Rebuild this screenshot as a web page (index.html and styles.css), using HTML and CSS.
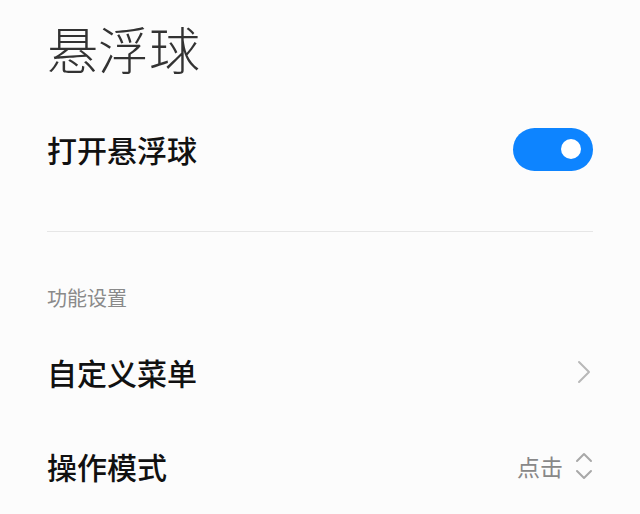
FILE: index.html
```html
<!DOCTYPE html>
<html lang="zh-CN">
<head>
    <meta charset="UTF-8">
    <title>悬浮球</title>
    <link rel="stylesheet" href="styles.css">
</head>
<body>
    <div class="page">
        <h1 class="page-title">悬浮球</h1>

        <div class="row row-main">
            <span class="row-label">打开悬浮球</span>
            <span class="switch on"><span class="knob"></span></span>
        </div>

        <div class="divider"></div>

        <div class="section-title">功能设置</div>

        <div class="row">
            <span class="row-label">自定义菜单</span>
            <svg class="chevron" width="14" height="24" viewBox="0 0 14 24">
                <path d="M2 2 L12 12 L2 22" fill="none" stroke="#b8b8b8" stroke-width="2" stroke-linecap="round" stroke-linejoin="round"/>
            </svg>
        </div>

        <div class="row">
            <span class="row-label">操作模式</span>
            <span class="row-value">
                点击
                <svg class="updown" width="18" height="28" viewBox="0 0 18 28">
                    <path d="M2 9 L9 2 L16 9 M2 19 L9 26 L16 19" fill="none" stroke="#a8a8a8" stroke-width="2" stroke-linecap="round" stroke-linejoin="round"/>
                </svg>
            </span>
        </div>
    </div>
</body>
</html>
```

FILE: styles.css
```css
body {
    margin: 0;
    background-color: #fcfcfc;
    font-family: 'Noto Sans CJK SC', 'Noto Sans', sans-serif;
    color: #1a1a1a;
}
.page {
    padding: 0 47px;
}
.page-title {
    margin: 0;
    padding-top: 17px;
    font-size: 51px;
    font-weight: 300;
    line-height: 62px;
    color: #333;
}
.row {
    display: flex;
    align-items: center;
    justify-content: space-between;
    height: 94px;
}
.row-main {
    height: 80px;
    margin-top: 30px;
}
.section-title + .row {
    margin-top: 13px;
}
.row-label {
    font-size: 30px;
    font-weight: 500;
    color: #111;
}
.switch {
    width: 80px;
    height: 43px;
    border-radius: 22px;
    background-color: #0d84ff;
    display: flex;
    align-items: center;
    justify-content: flex-end;
    padding-right: 12px;
    box-sizing: border-box;
}
.knob {
    width: 20px;
    height: 20px;
    border-radius: 50%;
    background-color: #fff;
}
.divider {
    height: 1px;
    background-color: #e6e6e6;
    margin-top: 42px;
}
.section-title {
    margin-top: 52px;
    font-size: 20px;
    color: #8a8a8a;
    line-height: 28px;
}
.chevron {
    margin-right: 2px;
}
.row-value {
    display: flex;
    align-items: center;
    gap: 12px;
    font-size: 23px;
    color: #888;
}
```
